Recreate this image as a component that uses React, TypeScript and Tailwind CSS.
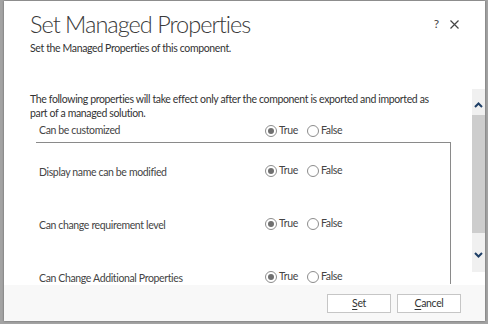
import React from "react";

// ── プロパティ行の定義 ──
const ROWS = [
  "Can be customized",
  "Display name can be modified",
  "Can change requirement level",
  "Can Change Additional Properties",
];

const TXT = "text-[10.5px] tracking-[-0.36px]";

function Radio({ checked }: { checked: boolean }) {
  return (
    <span className="flex-none w-[12px] h-[12px] rounded-full border border-[#8c8c8c] bg-white flex items-center justify-center">
      {checked && <span className="w-[6px] h-[6px] rounded-full bg-[#707070]" />}
    </span>
  );
}

function RadioPair() {
  return (
    <div className={`flex items-center ${TXT} text-[#444]`}>
      <Radio checked />
      <span className="ml-[2px] w-[28px]">True</span>
      <Radio checked={false} />
      <span className="ml-[2px]">False</span>
    </div>
  );
}

export default function App() {
  return (
    <div
      className="w-[488px] h-[324px] bg-[#a3a3a3] pl-[4px] pt-[1px] overflow-hidden"
      style={{ fontFamily: 'Lato, "Noto Sans", sans-serif' }}
    >
      <div className="w-[481px] h-[320px] bg-white flex flex-col shadow-[0_0_2px_rgba(0,0,0,0.4)]">
        {/* ── ヘッダー ── */}
        <div className="h-[88px] flex-none pl-[26px] pr-[26px] flex">
          <div className="flex-1">
            <h1 className="text-[23.5px] leading-[30px] pt-[8px] text-[#3a3a3a] font-light tracking-[-1px]">
              Set Managed Properties
            </h1>
            <p className={`${TXT} leading-[16px] text-[#333] mt-[1px]`}>
              Set the Managed Properties of this component.
            </p>
          </div>
          <div className="flex items-start pt-[16px] gap-[11px] text-[#444]">
            <span className="text-[12px] leading-[14px]">?</span>
            <svg width="9" height="9" viewBox="0 0 9 9" className="mt-[3px]">
              <path d="M0.5 0.5 L8.5 8.5 M8.5 0.5 L0.5 8.5" stroke="#444" strokeWidth="1.2" />
            </svg>
          </div>
        </div>

        {/* ── 本文（スクロール領域） ── */}
        <div className="h-[196px] flex-none flex">
          <div className="flex-1 pl-[26px] pt-[3px] overflow-hidden">
            <p className={`${TXT} leading-[14px] text-[#333] whitespace-nowrap`}>
              The following properties will take effect only after the component is exported and imported as
              <br />
              part of a managed solution.
            </p>
            <div className="flex items-center h-[22px] pl-[9px]">
              <span className={`w-[226px] ${TXT} text-[#444]`}>{ROWS[0]}</span>
              <RadioPair />
            </div>
            <div className="ml-[6px] w-[415px] border-t border-r border-[#8a8a8a] h-[142px]">
              {ROWS.slice(1).map((r, i) => (
                <div
                  key={r}
                  className={`flex items-end pl-[3px] ${i === 0 ? "h-[39px]" : "h-[53px]"}`}
                >
                  <span className={`w-[226px] ${TXT} text-[#444] pb-[1px]`}>{r}</span>
                  <div className="pb-[3px]">
                    <RadioPair />
                  </div>
                </div>
              ))}
            </div>
          </div>
          {/* スクロールバー */}
          <div className="w-[13px] flex-none flex flex-col">
            <div className="h-[183px] bg-[#f0f0f0] flex flex-col">
              <div className="h-[26px] flex items-center justify-center pt-[6px]">
                <svg width="9" height="6" viewBox="0 0 9 6">
                  <path d="M1 5 L4.5 1.5 L8 5" stroke="#1f3f66" strokeWidth="2" fill="none" />
                </svg>
              </div>
              <div className="h-[118px] bg-[#cdcdcd]" />
              <div className="flex-1 flex items-center justify-center pt-[4px]">
                <svg width="9" height="6" viewBox="0 0 9 6">
                  <path d="M1 1 L4.5 4.5 L8 1" stroke="#1f3f66" strokeWidth="2" fill="none" />
                </svg>
              </div>
            </div>
          </div>
        </div>

        {/* ── フッター ── */}
        <div className="flex-1 bg-[#f8f8f8] flex items-start justify-end pt-[9px] pr-[24px] gap-[6px]">
          <button className={`w-[64px] h-[19px] border border-[#c6c6c6] bg-white ${TXT} text-[#333] leading-none`}>
            <span className="underline underline-offset-2">S</span>et
          </button>
          <button className={`w-[64px] h-[19px] border border-[#c6c6c6] bg-white ${TXT} text-[#333] leading-none`}>
            <span className="underline underline-offset-2">C</span>ancel
          </button>
        </div>
      </div>
    </div>
  );
}
